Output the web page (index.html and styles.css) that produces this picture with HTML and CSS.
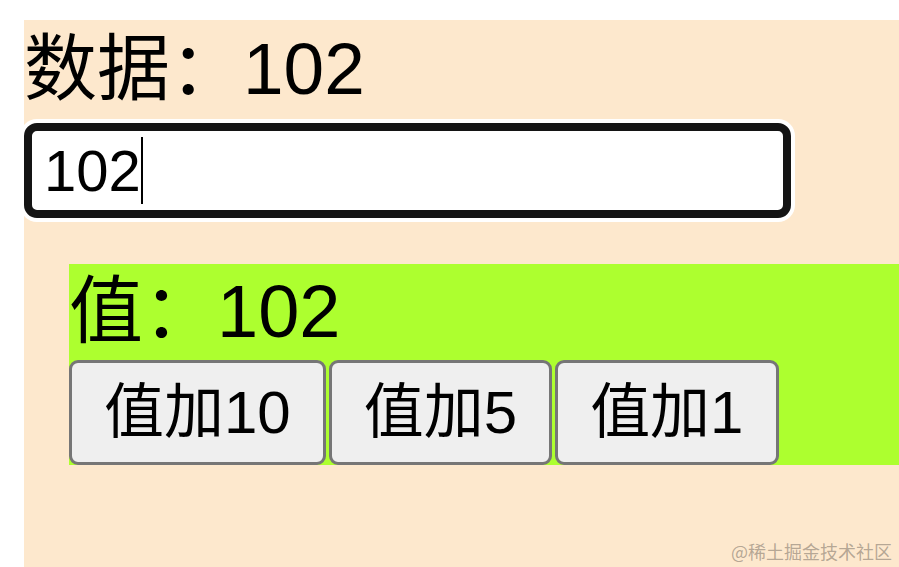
FILE: index.html
```html
<!DOCTYPE html>
<html lang="zh-CN">
<head>
<meta charset="utf-8">
<title>数据</title>
<link rel="stylesheet" href="styles.css">
</head>
<body>
<div class="app">
  <div class="title">数据：102</div>
  <div class="field">
    <input class="input" type="text" value="102">
    <span class="caret"></span>
  </div>
  <div class="child">
    <div class="value">值：102</div>
    <div class="buttons">
      <button class="btn" type="button">值加10</button><button class="btn" type="button">值加5</button><button class="btn" type="button">值加1</button>
    </div>
  </div>
  <div class="watermark">@稀土掘金技术社区</div>
</div>
</body>
</html>
```
FILE: styles.css
```css
html, body {
  margin: 0;
  padding: 0;
  background: #ffffff;
  overflow: hidden;
}
body {
  font-family: "Liberation Sans", "Noto Sans CJK SC", sans-serif;
  color: #000;
}
.app {
  position: relative;
  margin: 20px 0 0 24px;
  height: 547px;
  background: #fde8cd;
  display: flex;
  flex-direction: column;
  align-items: flex-start;
}
.title {
  font-size: 73px;
  line-height: 97px;
  height: 97px;
  white-space: nowrap;
}
.field {
  position: relative;
  margin-top: 6px;
}
.input {
  display: block;
  box-sizing: border-box;
  width: 767px;
  height: 95px;
  margin: 0;
  padding: 0 0 0 12px;
  border: 8px solid #141414;
  border-radius: 13px;
  background: #fff;
  box-shadow: 0 0 0 4px #ffffff;
  font-family: "Liberation Sans", "Noto Sans CJK SC", sans-serif;
  font-size: 58px;
  color: #000;
  outline: none;
  caret-color: transparent;
}
.caret {
  position: absolute;
  left: 117px;
  top: 14px;
  width: 2px;
  height: 67px;
  background: #000;
}
.child {
  margin-top: 46px;
  margin-left: 45px;
  align-self: stretch;
  background: #adff2f;
}
.value {
  font-size: 74px;
  line-height: 96px;
  height: 96px;
  white-space: nowrap;
}
.buttons {
  display: flex;
  gap: 3px;
}
.btn {
  box-sizing: border-box;
  height: 105px;
  margin: 0;
  padding: 0 32px;
  border: 3px solid #767676;
  border-radius: 9px;
  background: #efefef;
  font-family: "Liberation Sans", "Noto Sans CJK SC", sans-serif;
  font-size: 60px;
  line-height: 1;
  color: #000;
  white-space: nowrap;
}
.watermark {
  position: absolute;
  right: 7px;
  bottom: 5px;
  font-family: "Noto Sans CJK SC", sans-serif;
  font-size: 18px;
  line-height: 22px;
  color: rgba(120, 110, 100, 0.55);
  white-space: nowrap;
}
```
